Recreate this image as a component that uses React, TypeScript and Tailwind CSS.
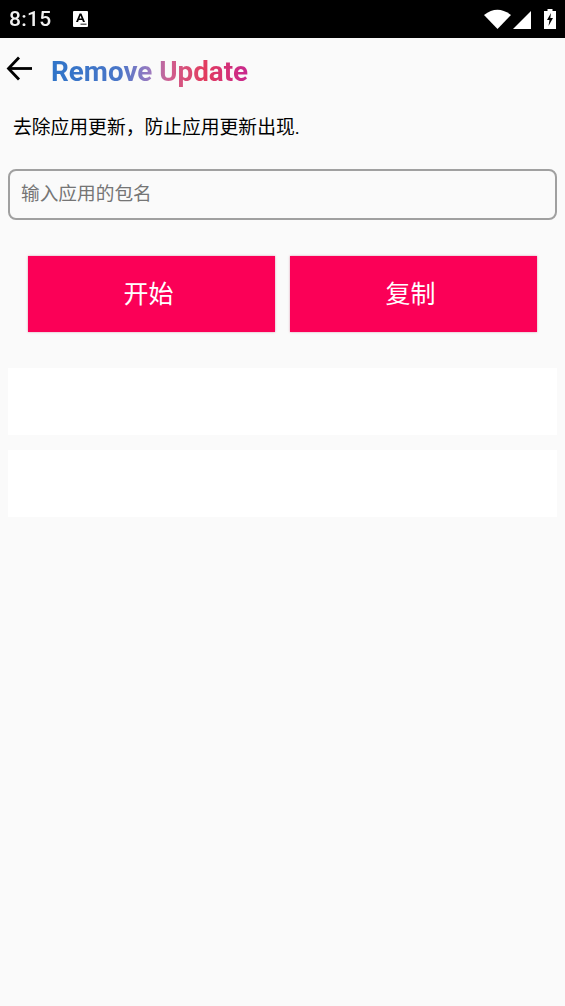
export default function App() {
  const cjk = { fontFamily: '"Roboto","Noto Sans CJK SC",sans-serif' };
  return (
    <div className="w-[565px] h-[1006px] bg-[#fafafa] flex flex-col overflow-hidden" style={cjk}>
      <div className="h-[38px] bg-black flex items-center pl-[9px] pr-[9px] text-white shrink-0">
        <span className="text-[21px] leading-none font-medium tracking-[0.3px] font-['Roboto'] opacity-95">8:15</span>
        <svg className="ml-[21px]" width="15" height="16" viewBox="0 0 15 16">
          <rect width="15" height="16" rx="1" fill="#fff" />
          <path d="M3 11 L6.6 2.5 H8.4 L12 11 H10 L9.2 9 H5.8 L5 11 Z M6.4 7.4 H8.6 L7.5 4.6 Z" fill="#000" fillRule="evenodd" />
          <rect x="7.5" y="12.5" width="6" height="1.5" fill="#666" />
        </svg>
        <div className="ml-auto flex items-center">
          <svg width="27" height="20" viewBox="0 0 27 20">
            <path d="M0 6 Q13.5 -4.5 27 6 L13.5 20 Z" fill="#fff" />
          </svg>
          <svg className="ml-[2px]" width="19" height="19" viewBox="0 0 19 19">
            <path d="M0 19 L18 1 V19 Z" fill="#fff" />
          </svg>
          <svg className="ml-[12px]" width="12" height="20" viewBox="0 0 12 20">
            <path d="M3.5 0 H8.5 V2 H12 V20 H0 V2 H3.5 Z" fill="#fff" />
            <path d="M7 4 L3 11 H5.5 L4.5 17 L9 9 H6.3 Z" fill="#000" />
          </svg>
        </div>
      </div>
      <div className="h-[64px] flex items-center shrink-0 pl-[6px]">
        <svg className="mb-[3px]" width="27" height="27" viewBox="0 0 27 27" fill="none" stroke="#000" strokeWidth="2.8">
          <path d="M26 13.5 H2.5" />
          <path d="M13 2.5 L2.5 13.5 L13 24.5" />
        </svg>
        <span
          className="ml-[18px] mt-[3px] text-[27.8px] leading-[34px] font-bold text-transparent bg-clip-text bg-[linear-gradient(90deg,#2f74c8_0%,#4a76c8_35%,#9a7ac0_50%,#cf5f90_60%,#e23c5e_78%,#c8288f_100%)] font-['Roboto']"
        >
          Remove Update
        </span>
      </div>
      <div className="mt-[14px] pl-[13px] text-[18.8px] leading-[24px] text-black h-[24px] shrink-0">去除应用更新，防止应用更新出现.</div>
      <div className="mx-[8px] mt-[29px] h-[51px] border-2 border-[#a0a0a0] rounded-[8px] flex items-center pl-[11px] text-[18.7px] text-[#757575] shrink-0">
        输入应用的包名
      </div>
      <div className="mt-[36px] mx-[28px] flex gap-[15px] shrink-0">
        <div className="flex-1 h-[76px] pr-[6px] pt-[1px] bg-[#fb0057] shadow-[0_0_2px_rgba(200,80,120,0.6)] flex items-center justify-center text-white text-[25px]">开始</div>
        <div className="flex-1 h-[76px] pr-[6px] pt-[1px] bg-[#fb0057] shadow-[0_0_2px_rgba(200,80,120,0.6)] flex items-center justify-center text-white text-[25px]">复制</div>
      </div>
      <div className="mt-[36px] mx-[8px] h-[67px] bg-white shrink-0" />
      <div className="mt-[15px] mx-[8px] h-[67px] bg-white shrink-0" />
    </div>
  );
}
